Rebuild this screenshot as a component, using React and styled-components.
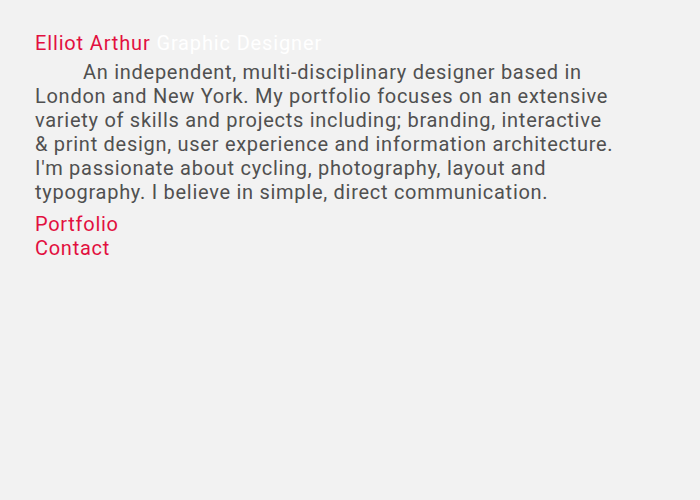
import styled, { createGlobalStyle } from "styled-components";

const GlobalStyle = createGlobalStyle`
  html, body {
    margin: 0;
    padding: 0;
    background: #f2f2f2;
  }
  body {
    font-family: Roboto, "Liberation Sans", sans-serif;
    font-size: 20px;
    line-height: 24px;
    letter-spacing: 0.72px;
    color: #505050;
  }
`;

const Page = styled.div`
  padding: 31px 35px;
  max-width: 582px;
`;

const Header = styled.h1`
  margin: 0;
  font-size: 20px;
  font-weight: 400;
  line-height: 24px;
  letter-spacing: 0.85px;
`;

const Name = styled.span`
  color: #e2103f;
`;

const Role = styled.span`
  color: #ffffff;
`;

const Bio = styled.p`
  margin: 5px 0 8px;
  text-indent: 48px;
`;

const Nav = styled.nav`
  display: flex;
  flex-direction: column;
  align-items: flex-start;
`;

const NavLink = styled.a`
  color: #e2103f;
  text-decoration: none;
`;

export default function App() {
  return (
    <Page>
      <GlobalStyle />
      <Header>
        <Name>Elliot Arthur</Name> <Role>Graphic Designer</Role>
      </Header>
      <Bio>
        An independent, multi-disciplinary designer based in London and New
        York. My portfolio focuses on an extensive variety of skills and
        projects including; branding, interactive &amp; print design, user
        experience and information architecture. I'm passionate about cycling,
        photography, layout and typography. I believe in simple, direct
        communication.
      </Bio>
      <Nav>
        <NavLink href="#">Portfolio</NavLink>
        <NavLink href="#">Contact</NavLink>
      </Nav>
    </Page>
  );
}
